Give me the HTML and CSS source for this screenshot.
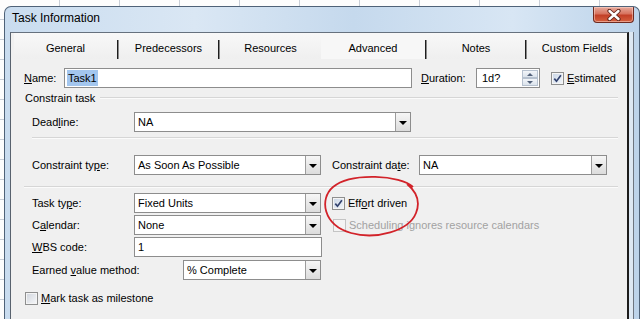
FILE: index.html
```html
<!DOCTYPE html>
<html lang="en">
<head>
    <meta charset="UTF-8">
    <title>Task Information</title>
    <link rel="stylesheet" href="styles.css">
</head>
<body>

    <!-- Ventana del diálogo -->
    <div class="window">
        <div class="titlebar">
            <span class="title">Task Information</span>
            <div class="close-btn">
                <svg width="16" height="12" viewBox="0 0 16 12">
                    <path d="M3.5 2 L12.5 10 M12.5 2 L3.5 10" stroke="#5e2219" stroke-width="4.2" stroke-linecap="round"/>
                    <path d="M3.5 2 L12.5 10 M12.5 2 L3.5 10" stroke="#fff" stroke-width="2.4" stroke-linecap="round"/>
                </svg>
            </div>
        </div>

        <div class="client">
            <!-- Pestañas -->
            <div class="tabs">
                <div class="tab tab-general"><span class="tab-label">General</span><span class="tab-sep"></span></div>
                <div class="tab tab-pred"><span class="tab-label">Predecessors</span><span class="tab-sep"></span></div>
                <div class="tab tab-res"><span class="tab-label">Resources</span></div>
                <div class="tab tab-adv active"><span class="tab-label">Advanced</span><span class="tab-sep"></span></div>
                <div class="tab tab-notes"><span class="tab-label">Notes</span><span class="tab-sep"></span></div>
                <div class="tab tab-custom"><span class="tab-label">Custom Fields</span></div>
            </div>

            <!-- Contenido de la pestaña -->
            <div class="page">
                <div class="row">
                    <span class="lbl lbl-name"><u>N</u>ame:</span>
                    <div class="field f-name"><span class="selected-text">Task1</span></div>
                    <span class="lbl lbl-dur"><u>D</u>uration:</span>
                    <div class="field f-dur">
                        <span class="dur-text">1d?</span>
                        <div class="spin">
                            <span class="spin-btn"><span class="arrow-up"></span></span>
                            <span class="spin-btn"><span class="arrow-down"></span></span>
                        </div>
                    </div>
                    <span class="check checked chk-est">
                        <svg width="11" height="11" viewBox="0 0 11 11"><path d="M2.3 5.6 L4.5 8.2 L8.9 2.3" stroke="#33436f" stroke-width="1.7" fill="none"/></svg>
                    </span>
                    <span class="check-text"><u>E</u>stimated</span>
                </div>

                <div class="group-head">
                    <span>Constrain task</span>
                    <span class="group-line"></span>
                </div>

                <div class="section">
                    <div class="row row-deadline">
                        <span class="lbl lbl-col">Dead<u>l</u>ine:</span>
                        <div class="field select f-deadline">NA<span class="drop"><span class="arrow-down"></span></span></div>
                    </div>
                    <div class="sep sep-inner"></div>
                    <div class="row row-constraint">
                        <span class="lbl lbl-col">Constraint ty<u>p</u>e:</span>
                        <div class="field select f-mid">As Soon As Possible<span class="drop"><span class="arrow-down"></span></span></div>
                        <span class="lbl lbl-cdate">Constraint da<u>t</u>e:</span>
                        <div class="field select f-cdate">NA<span class="drop"><span class="arrow-down"></span></span></div>
                    </div>
                </div>

                <div class="sep sep-outer"></div>

                <div class="section lower">
                    <div class="row">
                        <span class="lbl lbl-col">Task ty<u>p</u>e:</span>
                        <div class="field select f-mid">Fixed Units<span class="drop"><span class="arrow-down"></span></span></div>
                        <span class="check checked chk-effort">
                            <svg width="11" height="11" viewBox="0 0 11 11"><path d="M2.3 5.6 L4.5 8.2 L8.9 2.3" stroke="#33436f" stroke-width="1.7" fill="none"/></svg>
                        </span>
                        <span class="check-text">Eff<u>o</u>rt driven</span>
                    </div>
                    <div class="row row-tight">
                        <span class="lbl lbl-col">C<u>a</u>lendar:</span>
                        <div class="field select f-mid">None<span class="drop"><span class="arrow-down"></span></span></div>
                        <span class="check disabled chk-sched"></span>
                        <span class="check-text text-disabled">Scheduling ignores resource calendars</span>
                    </div>
                    <div class="row row-tight">
                        <span class="lbl lbl-col"><u>W</u>BS code:</span>
                        <div class="field f-wbs">1</div>
                    </div>
                    <div class="row row-earned">
                        <span class="lbl lbl-earned">Earned <u>v</u>alue method:</span>
                        <div class="field select f-earned">% Complete<span class="drop"><span class="arrow-down"></span></span></div>
                    </div>
                </div>

                <div class="row row-milestone">
                    <span class="check chk-mile"></span>
                    <span class="check-text mile-text"><u>M</u>ark task as milestone</span>
                </div>
            </div>

            <!-- Marca roja dibujada a mano -->
            <svg class="annotation" width="100" height="66" viewBox="0 0 100 66">
                <path d="M92 14 C80 2, 30 -1, 12 14 C-2 26, 2 52, 30 60 C55 67, 88 58, 95 40 C99 30, 97 20, 86 11" stroke="#d2232a" stroke-width="1.8" fill="none"/>
            </svg>
        </div>
    </div>

</body>
</html>
```

FILE: styles.css
```css
/* Estilos generales */
* {
    margin: 0;
    padding: 0;
    box-sizing: border-box;
}

html, body {
    width: 640px;
    height: 319px;
    overflow: hidden;
}

body {
    font-family: "Liberation Sans", Arial, sans-serif;
    font-size: 11px;
    color: #000;
    background-color: #fdfdfd;
    background-image:
        repeating-linear-gradient(to right, transparent 0 59px, #c9cfd8 59px 60px),
        repeating-linear-gradient(to bottom, transparent 0 19px, #c9cfd8 19px 20px);
    padding: 6px 0 0 4px;
}

/* Marco de la ventana */
.window {
    width: 636px;
    height: 313px;
    overflow: hidden;
    border: 1px solid #4f6278;
    border-bottom: none;
    border-radius: 7px 7px 0 0;
    background: linear-gradient(to right, #c9dcef 0%, #dae7f4 30%, #c5d9ed 55%, #d8e6f4 80%, #bcd3ea 100%);
    padding: 0 10px 0 5px;
    display: flex;
    flex-direction: column;
}

.titlebar {
    height: 25px;
    flex: none;
    display: flex;
    justify-content: space-between;
    align-items: flex-start;
}

.title {
    font-size: 12px;
    line-height: 23px;
    padding-left: 2px;
}

.close-btn {
    width: 41px;
    height: 16px;
    margin-right: -5px;
    border: 1px solid #6e2a20;
    border-top: none;
    border-radius: 0 0 4px 4px;
    background: linear-gradient(to bottom, #e7aa9c 0%, #d7735f 45%, #c23f27 55%, #d5603f 100%);
    box-shadow: inset 0 0 0 1px rgba(255, 220, 210, 0.5);
    display: flex;
    align-items: center;
    justify-content: center;
}

/* Área cliente */
.client {
    flex: 1;
    position: relative;
    background-color: #f0f0f0;
    border-left: 1px solid #58626e;
    border-top: 1px solid #66717e;
    border-right: 2px solid #1c1c1c;
    box-shadow: 4px 0 0 #dde8f3, 5px 0 0 #6d7580;
}

/* Pestañas */
.tabs {
    display: flex;
    height: 26px;
    margin-left: 3px;
}

.tab {
    display: flex;
    align-items: stretch;
    background: linear-gradient(to bottom, #f8f8f8, #efefef);
}

.tab.active {
    background: #f7f7f7;
}

.tab-label {
    flex: 1;
    text-align: center;
    font-size: 11px;
    padding-top: 9px;
}

.tab-sep {
    align-self: flex-end;
    width: 2px;
    height: 19px;
    border-left: 1px solid #1e1e1e;
    border-right: 1px solid #8a8a8a;
}

.tab-general { width: 105px; }
.tab-pred { width: 101px; }
.tab-res { width: 101px; }
.tab-adv { width: 106px; }
.tab-notes { width: 100px; }
.tab-custom { width: 100px; }

/* Contenido */
.page {
    padding: 9px 9px 0 13px;
}

.row {
    display: flex;
    align-items: center;
    height: 20px;
}

.lbl {
    white-space: nowrap;
}

.lbl-name { width: 40px; }
.lbl-dur { width: 55px; margin-left: 9px; }
.lbl-col { width: 102px; }
.lbl-cdate { width: 87px; margin-left: 11px; }
.lbl-earned { width: 151px; }

.field {
    height: 20px;
    border: 1px solid #8d8d8d;
    background: #fff;
    padding-left: 3px;
    line-height: 18px;
    display: flex;
    align-items: stretch;
    white-space: nowrap;
}

.f-name { width: 348px; padding-left: 2px; padding-top: 1px; padding-bottom: 1px; line-height: 16px; }
.f-dur { width: 64px; padding-left: 5px; padding-right: 1px; }
.f-deadline { width: 277px; }
.f-mid { width: 187px; }
.f-cdate { width: 188px; }
.f-wbs { width: 188px; }
.f-earned { width: 138px; }

.selected-text {
    background-color: #a3c6ee;
    padding: 0 1px;
}

.dur-text {
    flex: 1;
}

/* Botones de flecha */
.drop {
    margin-left: auto;
    width: 15px;
    border-left: 1px solid #9c9c9c;
    background: linear-gradient(to bottom, #f6f6f6, #dcdcdc);
    display: flex;
    align-items: center;
    justify-content: center;
    padding-top: 2px;
}

.arrow-down {
    width: 0;
    height: 0;
    border-left: 4px solid transparent;
    border-right: 4px solid transparent;
    border-top: 4px solid #000;
}

.spin {
    width: 16px;
    display: flex;
    flex-direction: column;
    padding: 1px 0;
}

.spin-btn {
    flex: 1;
    border: 1px solid #b6c1cf;
    background: linear-gradient(to bottom, #f2f5f9, #dbe3ec);
    display: flex;
    align-items: center;
    justify-content: center;
}

.spin .arrow-down {
    border-left-width: 3px;
    border-right-width: 3px;
    border-top: 3px solid #52617a;
}

.arrow-up {
    width: 0;
    height: 0;
    border-left: 3px solid transparent;
    border-right: 3px solid transparent;
    border-bottom: 3px solid #52617a;
}

/* Casillas */
.check {
    width: 13px;
    height: 13px;
    flex: none;
    border: 1px solid #8e8f8f;
    background: linear-gradient(135deg, #cfd4dc, #f7f8fa);
    box-shadow: inset 0 0 0 1px #f4f4f4;
    display: flex;
}

.check.checked {
    background: linear-gradient(135deg, #c9d5e6, #f3f6fa);
}

.check.disabled {
    border-color: #c4c4c4;
    background: #f4f4f4;
    box-shadow: none;
}

.check-text {
    margin-left: 3px;
    white-space: nowrap;
}

.text-disabled {
    color: #a2a2a2;
}

.chk-est { margin-left: 11px; }
.chk-effort { margin-left: 11px; }
.chk-sched { margin-left: 12px; }
.chk-mile { margin-left: 1px; }

/* Grupo de restricciones */
.group-head {
    display: flex;
    align-items: center;
    height: 14px;
    margin-top: 3px;
    padding-left: 1px;
}

.group-line {
    flex: 1;
    margin-left: 5px;
    border-top: 1px solid #d6d6d6;
    border-bottom: 1px solid #fbfbfb;
}

.section {
    padding-left: 8px;
}

.row-deadline { margin-top: 7px; }
.row-constraint { margin-top: 16px; }

.sep {
    border-top: 1px solid #d6d6d6;
    border-bottom: 1px solid #fbfbfb;
}

.sep-inner { margin-top: 5px; }
.sep-outer { margin-top: 11px; }

.lower { margin-top: 5px; }
.row-tight { margin-top: 2px; }
.row-earned { margin-top: 3px; }
.row-milestone { margin-top: 11px; height: 14px; }

/* Marca roja */
.annotation {
    position: absolute;
    left: 310px;
    top: 140px;
}
```
